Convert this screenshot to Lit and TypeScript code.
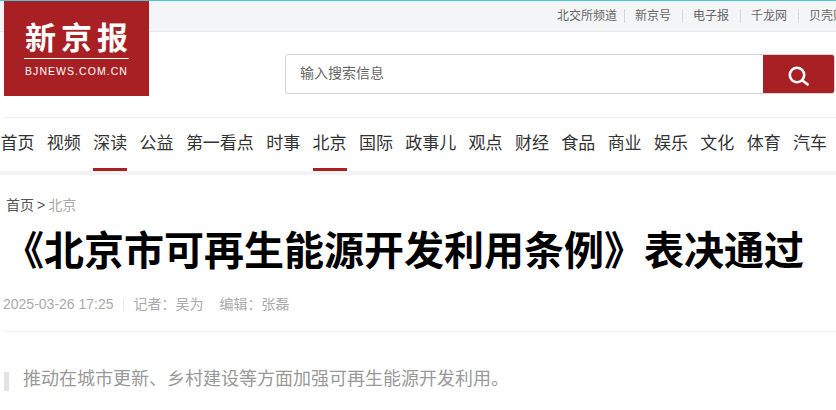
import { LitElement, html, css } from "lit";
import { customElement } from "lit/decorators.js";

const TOP = ["北交所频道", "新京号", "电子报", "千龙网", "贝壳财经"];
const NAV = ["首页", "视频", "深读", "公益", "第一看点", "时事", "北京", "国际", "政事儿", "观点", "财经", "食品", "商业", "娱乐", "文化", "体育", "汽车"];
const ACTIVE = new Set(["深读", "北京"]);

@customElement("app-root")
export class AppRoot extends LitElement {
  static styles = css`
    :host {
      display: block;
      width: 836px;
      height: 410px;
      overflow: hidden;
      background: #fff;
      font-family: "Liberation Sans", "Noto Sans CJK SC", sans-serif;
      position: relative;
    }
    .topbar {
      height: 30px;
      border-top: 1px solid #4fc5cf;
      border-bottom: 1px solid #e6e8ea;
      background: #f4f5f7;
      display: flex;
      align-items: center;
      padding-left: 557px;
      overflow: hidden;
      white-space: nowrap;
    }
    .toplink {
      font-size: 12px;
      line-height: 14px;
      color: #666;
      padding: 0 10.5px;
      border-right: 1px solid #d8d8d8;
      flex: none;
    }
    .toplink:first-child { padding: 0 6.5px 0 0; }
    .toplink:last-child { border-right: 0; }
    .logo {
      position: absolute;
      left: 4px;
      top: 1px;
      width: 145px;
      height: 95px;
      background: #a81f24;
      color: #fff;
      box-sizing: border-box;
      padding-top: 17px;
      display: flex;
      flex-direction: column;
      align-items: center;
    }
    .logo-name {
      font-family: "Noto Sans CJK SC", sans-serif;
      font-weight: 700;
      font-size: 31px;
      line-height: 36px;
      letter-spacing: 5px;
      margin-right: -5px;
    }
    .logo-rule { width: 105px; height: 1px; background: #fff; margin-top: 4px; }
    .logo-url {
      font-weight: 400;
      font-size: 10.5px;
      line-height: 12px;
      letter-spacing: 1.05px;
      margin-top: 6px;
    }
    .search-row {
      height: 85px;
      display: flex;
      align-items: flex-start;
      padding: 22px 1px 0 285px;
      box-sizing: border-box;
    }
    .search {
      flex: 1;
      height: 40px;
      display: flex;
      box-sizing: border-box;
      border: 1px solid #d4d4d4;
      border-radius: 3px;
      overflow: hidden;
    }
    .search-text {
      flex: 1;
      font-size: 14px;
      line-height: 36px;
      color: #666;
      padding-left: 14px;
    }
    .search-btn {
      width: 72px;
      margin: -1px;
      background: #a81f24;
      display: flex;
      align-items: center;
      justify-content: center;
    }
    .search-btn svg { margin: 2px 0 0 0; }
    .nav-wrap {
      margin-left: 4px;
      border-top: 1px solid #eee;
    }
    .nav {
      margin-left: -4px;
      padding-left: 0.5px;
      height: 53px;
      display: flex;
      gap: 12.35px;
      white-space: nowrap;
      width: 836px;
      overflow: hidden;
      box-sizing: border-box;
    }
    .nav-item {
      font-size: 17px;
      line-height: 24px;
      color: #333;
      height: 53px;
      padding-top: 14px;
      box-sizing: border-box;
      flex: none;
      border-bottom: 3px solid transparent;
    }
    .nav-item.on { border-bottom-color: #a81f24; }
    .band { height: 4px; background: #f3f3f3; }
    .crumb {
      margin: 21px 0 0 6px;
      font-size: 14px;
      line-height: 18px;
      color: #555;
      word-spacing: -0.8px;
    }
    .crumb .cur { color: #aaa; }
    h1 {
      margin: 10px 0 0 4px;
      font-size: 40px;
      font-weight: 700;
      line-height: 54px;
      color: #000;
      white-space: nowrap;
    }
    .meta {
      margin: 17px 0 0 3px;
      height: 18px;
      display: flex;
      align-items: center;
      font-size: 14px;
      line-height: 18px;
      color: #aaa;
      white-space: nowrap;
    }
    .sep { width: 1px; height: 13px; background: #e8e8e8; margin: 0 10px 0 9px; }
    .editor { margin-left: 16px; }
    .rule { margin: 18px 0 0 4px; height: 1px; background: #f0f0f0; }
    .summary {
      margin: 35px 0 0 4px;
      height: 24px;
      position: relative;
      font-size: 18px;
      line-height: 24px;
      color: #999;
      padding-left: 19px;
    }
    .summary::before {
      content: "";
      position: absolute;
      left: 0;
      top: 5px;
      width: 5px;
      height: 19px;
      background: #e2e2e2;
    }
  `;

  render() {
    return html`
      <div class="topbar">
        ${TOP.map((t) => html`<span class="toplink">${t}</span>`)}
      </div>
      <div class="logo">
        <div class="logo-name">新京报</div>
        <div class="logo-rule"></div>
        <div class="logo-url">BJNEWS.COM.CN</div>
      </div>
      <div class="search-row">
        <div class="search">
          <div class="search-text">输入搜索信息</div>
          <div class="search-btn">
            <svg width="24" height="24" viewBox="0 0 24 24" fill="none" stroke="#fff" stroke-linecap="round">
              <circle cx="10" cy="12" r="7.2" stroke-width="2.6"></circle>
              <path d="M15.8 17.8l4.8 3.6" stroke-width="2.6"></path>
            </svg>
          </div>
        </div>
      </div>
      <div class="nav-wrap">
        <div class="nav">
          ${NAV.map((n) => html`<span class="nav-item ${ACTIVE.has(n) ? "on" : ""}">${n}</span>`)}
        </div>
      </div>
      <div class="band"></div>
      <div class="crumb">首页 &gt; <span class="cur">北京</span></div>
      <h1>《北京市可再生能源开发利用条例》表决通过</h1>
      <div class="meta">
        <span>2025-03-26 17:25</span>
        <span class="sep"></span>
        <span>记者：吴为</span>
        <span class="editor">编辑：张磊</span>
      </div>
      <div class="rule"></div>
      <div class="summary">推动在城市更新、乡村建设等方面加强可再生能源开发利用。</div>
    `;
  }
}
